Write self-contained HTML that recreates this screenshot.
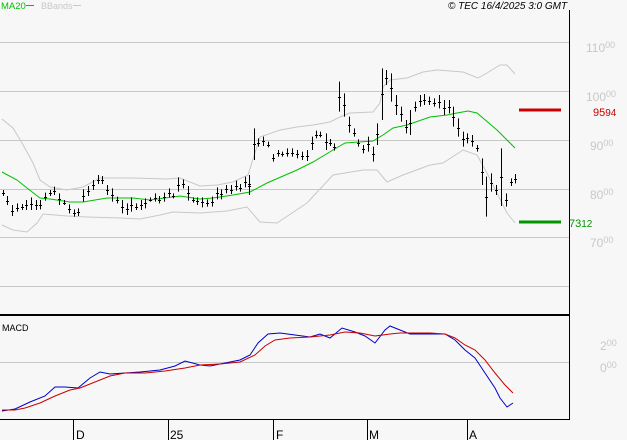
<!DOCTYPE html>
<html><head><meta charset="utf-8"><style>
html,body{margin:0;padding:0;background:#f7f7f7;}
svg{display:block;font-family:"Liberation Sans",sans-serif;}
</style></head><body>
<svg id="s" width="627" height="440" viewBox="0 0 627 440" xmlns="http://www.w3.org/2000/svg">
<rect width="627" height="440" fill="#f7f7f7"/>
<g stroke="#c8c8c8" stroke-width="1">
<line x1="0" y1="42.5" x2="569" y2="42.5"/>
<line x1="0" y1="91.5" x2="569" y2="91.5"/>
<line x1="0" y1="140.5" x2="569" y2="140.5"/>
<line x1="0" y1="189.5" x2="569" y2="189.5"/>
<line x1="0" y1="237.5" x2="569" y2="237.5"/>
<line x1="0" y1="286.5" x2="569" y2="286.5"/>
<line x1="0" y1="362.5" x2="569" y2="362.5"/>
</g>
<line x1="569.5" y1="10" x2="569.5" y2="420" stroke="#000"/>
<line x1="0" y1="315" x2="569" y2="315" stroke="#000" stroke-width="2"/>
<line x1="0" y1="419.5" x2="570" y2="419.5" stroke="#000"/>
<g stroke="#000">
<line x1="73.5" y1="419" x2="73.5" y2="440"/>
<line x1="168.5" y1="419" x2="168.5" y2="440"/>
<line x1="273.5" y1="419" x2="273.5" y2="440"/>
<line x1="367.5" y1="419" x2="367.5" y2="440"/>
<line x1="467.5" y1="419" x2="467.5" y2="440"/>
</g>
<g font-size="12" fill="#000">
<text x="76" y="439">D</text>
<text x="170" y="439">25</text>
<text x="276" y="439">F</text>
<text x="369" y="439">M</text>
<text x="469" y="439">A</text>
</g>
<g fill="none" stroke-width="1">
<polyline stroke="#c8c8c8" points="2,119 13,128 22,143 33,163 40,180 50,187 67,190 83,187 100,178 133,178 167,179 180,178 200,186 217,185 233,182 248,175 260,137 280,130 297,127 313,125 330,122 340,117 350,113 373,112 380,103 383,87 390,80 407,78 423,72 437,70 463,72 478,78 487,73 500,65 507,65 515,74"/>
<polyline stroke="#c8c8c8" points="2,225 13,230 27,232 37,223 43,214 67,216 87,217 120,218 140,219 160,215 173,212 200,213 227,211 247,207 260,222 277,223 307,203 333,175 363,170 377,170 387,182 403,175 430,165 443,163 463,150 477,155 487,173 497,193 507,213 515,223"/>
<polyline stroke="#00c000" points="2,172 17,180 27,188 40,198 50,199 70,202 83,202 107,198 133,198 150,200 180,196 200,199 213,198 233,195 250,192 267,183 297,170 313,162 333,150 345,143 373,141 383,135 393,128 407,125 430,117 447,115 457,113 468,111 477,113 497,130 515,148"/>
<polyline stroke="#0000c8" points="2,411 15,409 30,402 45,396 55,387 65,387 78,388 90,378 100,372 110,374 125,373 140,372 160,370 175,366 185,361 200,365 210,366 220,364 240,360 250,355 258,343 268,334 280,333 295,335 310,337 320,334 330,338 342,328 355,332 365,336 375,343 385,330 390,326 400,330 410,334 425,334 445,334 455,340 465,350 475,358 485,373 495,388 500,398 507,407 513,403"/>
<polyline stroke="#c80000" points="2,410 15,410 25,408 40,403 55,396 70,390 80,388 95,382 110,376 125,373 145,373 165,371 185,368 200,365 220,364 240,362 255,355 265,346 275,340 290,338 310,337 330,335 345,332 360,333 375,336 390,334 400,333 430,333 445,334 455,338 465,345 475,350 485,360 495,373 505,385 513,393"/>
</g>
<g id="bars" stroke="#000" stroke-width="1"></g>
<line x1="519" y1="110" x2="561" y2="110" stroke="#c80000" stroke-width="3"/>
<line x1="519" y1="222" x2="561" y2="222" stroke="#009600" stroke-width="3"/>
<g font-size="12" fill="#c8c8c8">
<text x="586" y="52">110<tspan font-size="9" dy="-4">00</tspan></text>
<text x="586" y="101">100<tspan font-size="9" dy="-4">00</tspan></text>
<text x="590" y="150">90<tspan font-size="9" dy="-4">00</tspan></text>
<text x="590" y="199">80<tspan font-size="9" dy="-4">00</tspan></text>
<text x="590" y="247">70<tspan font-size="9" dy="-4">00</tspan></text>
<text x="600" y="350">2<tspan font-size="9" dy="-4">00</tspan></text>
<text x="600" y="372">0<tspan font-size="9" dy="-4">00</tspan></text>
</g>
<text x="593" y="116" font-size="11" fill="#c80000">95<tspan font-size="10">94</tspan></text>
<text x="569" y="227" font-size="11" fill="#009600">73<tspan font-size="10">12</tspan></text>
<text x="1" y="9" font-size="9.5" fill="#00c000">MA20</text>
<line x1="26" y1="5.5" x2="34" y2="5.5" stroke="#00c000"/>
<text x="41" y="9" font-size="9" fill="#c8c8c8">BBands</text>
<line x1="73" y1="5.5" x2="81" y2="5.5" stroke="#c8c8c8"/>
<text x="448" y="9" font-size="10" font-style="italic" fill="#000">© TEC 16/4/2025 3:0 GMT</text>
<text x="2" y="331" font-size="9" fill="#000">MACD</text>
</svg>
<script>
var L=[[8,240,258],[22,258,285],[37,285,318],[50,280,305],[65,282,300],[78,270,300],[93,262,300],[108,270,300],[120,270,298],[136,248,272],[150,240,258],[163,230,255],[177,250,285],[192,270,285],[207,283,310],[221,298,320],[235,295,318],[250,238,275],[264,228,258],[280,210,240],[294,195,222],[307,198,222],[322,225,255],[335,235,275],[350,260,280],[365,270,310],[380,280,315],[393,262,305],[407,280,300],[422,270,300],[435,265,295],[450,262,275],[465,250,275],[478,258,280],[493,248,275],[507,235,262],[520,250,265],[535,202,245],[550,208,235],[563,228,272],[578,262,278],[592,262,285],[607,262,292],[620,268,290],[635,260,290],[650,232,268],[663,238,268],[678,225,250],[692,225,252],[707,212,242],[720,222,245],[735,200,232],[748,198,255]];
var R=[[58,345,400],[72,205,300],[85,235,260],[98,230,258],[115,245,262],[130,282,305],[143,270,290],[157,275,290],[172,265,290],[187,265,290],[200,270,295],[215,275,300],[230,270,303],[245,230,270],[258,212,235],[270,215,232],[287,220,270],[300,237,258],[312,250,272],[328,65,155],[343,100,170],[357,170,218],[371,205,230],[385,238,260],[400,255,280],[413,230,275],[428,260,305],[442,190,255],[457,25,180],[468,30,75],[483,40,125],[498,105,165],[513,140,185],[527,180,220],[540,150,225],[555,125,155],[570,105,140],[583,102,135],[598,110,135],[612,115,140],[627,105,145],[641,120,165],[656,120,160],[670,140,200],[685,175,230],[698,215,260],[712,220,250],[727,225,260],[741,255,275],[755,295,375],[768,350,470],[783,340,395],[797,375,405],[812,265,438],[827,400,440],[842,355,378],[855,342,370]];
var g=document.getElementById('bars'),h='';
function add(x,a,b){x=Math.round(x)+0.5;var m=Math.round((a+b)/2)+0.5;
h+='<line x1="'+x+'" y1="'+a+'" x2="'+x+'" y2="'+b+'"/><line x1="'+(x-1.5)+'" y1="'+m+'" x2="'+(x+1.5)+'" y2="'+m+'"/>';}
L.forEach(function(d){add(d[0]/3,110+d[1]/3,110+d[2]/3);});
R.forEach(function(d){add(230+d[0]/3,60+d[1]/3,60+d[2]/3);});
g.innerHTML=h;
</script>
</body></html>
